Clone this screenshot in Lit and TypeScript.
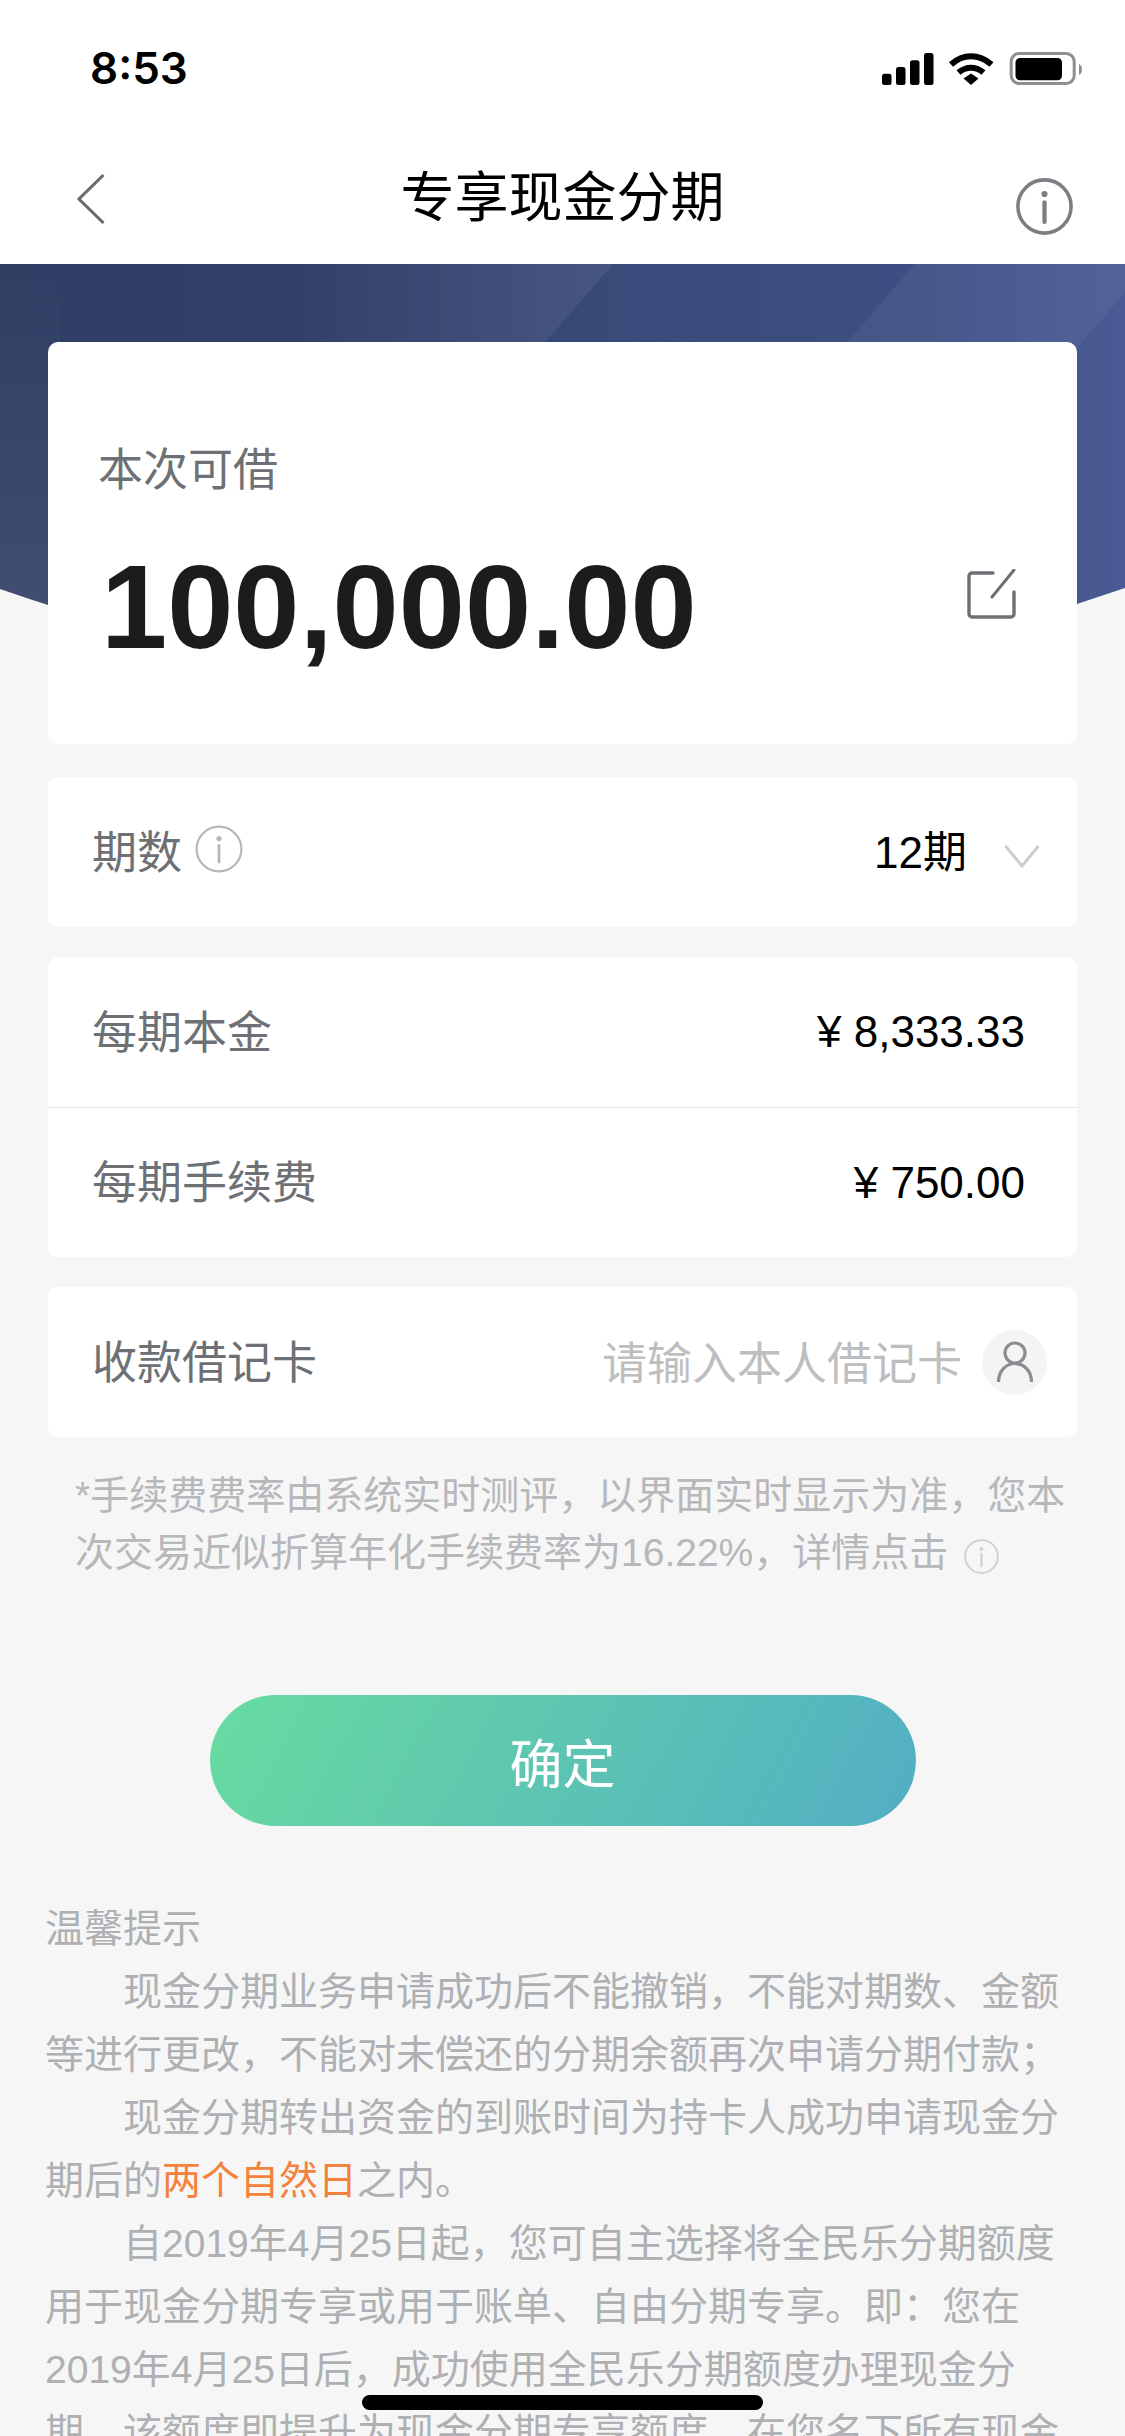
import { LitElement, html, css } from "lit";
import { customElement } from "lit/decorators.js";

const infoIcon = (size: number, color: string, sw: number) => html`<svg width=${size} height=${size} viewBox="0 0 48 48" fill="none" class="ico">
  <circle cx="24" cy="24" r="22.4" stroke=${color} stroke-width=${sw}/>
  <circle cx="24" cy="13.5" r="2.6" fill=${color}/>
  <path d="M24 20.5V37" stroke=${color} stroke-width=${sw + 0.6} stroke-linecap="round"/>
</svg>`;

@customElement("app-root")
export class AppRoot extends LitElement {
  static styles = css`
    :host { display: block; width: 1125px; height: 2436px; overflow: hidden; position: relative; background: #f6f6f6;
      font-family: "Liberation Sans", "Noto Sans CJK SC", sans-serif; color: #000; }
    .ico { display: block; flex: none; }
    .top { background: #fff; height: 264px; display: flex; flex-direction: column; }
    .status { height: 132px; display: flex; align-items: center; justify-content: space-between; padding: 2px 43px 0 90px; }
    .time { font: 600 44px/1 "Inter", "Liberation Sans", sans-serif; }
    .sys { display: flex; align-items: center; }
    .nav { flex: 1; display: grid; grid-template-columns: 1fr auto 1fr; align-items: center; padding: 0 52px; }
    .nav .back { margin-left: 25px; }
    .title { font-size: 54px; line-height: 64px; margin-top: -2px; }
    .nav .right { justify-self: end; padding-top: 14px; }
    .hero { position: relative; padding: 78px 48px 33px; }
    .hero-bg { position: absolute; left: 0; top: 0; display: block; }
    .card { position: relative; background: #fff; border-radius: 10px; }
    .amount-card { height: 402px; padding: 97px 51px 0; box-sizing: border-box; }
    .amount-label { font-size: 45px; line-height: 64px; color: #6d7175; margin-left: -1px; }
    .amount-row { display: flex; align-items: flex-start; justify-content: space-between; margin-top: 36px; padding-left: 2px; padding-right: 10px; }
    .amount { font-size: 119px; font-weight: 700; line-height: 136px; color: #1c1c1c; }
    .edit { margin-top: 30px; }
    .rows { padding: 0 48px; display: flex; flex-direction: column; gap: 30px; }
    .rows .card { overflow: hidden; }
    .row { height: 150px; box-sizing: border-box; display: flex; align-items: center; justify-content: space-between; padding: 0 52px 0 44px; font-size: 44px; }
    .row + .row { border-top: 1px solid #e6e6e6; }
    .label { color: #6d7175; display: flex; align-items: center; gap: 13px; font-size: 45px; margin-bottom: 6px; }
    .value { color: #000; }
    .select { padding-right: 37px; }
    .sel-val { display: flex; align-items: center; gap: 37px; margin-bottom: 6px; }
    .chev { margin-top: 13px; }
    .card-row { padding-right: 30px; }
    .card-val { display: flex; align-items: center; gap: 20px; color: #bdbec0; font-size: 45px; }
    .card-val .ph { margin-bottom: 3px; }
    .avatar { width: 65px; height: 65px; border-radius: 50%; background: #f4f4f4; display: flex; align-items: center; justify-content: center; }
    .note { margin: 30px 48px 0 75px; font-size: 39px; line-height: 57px; color: #b6b8bb; }
    .note .ico { display: inline-block; vertical-align: -8px; margin-left: 16px; }
    .btn { display: flex; align-items: center; justify-content: center; width: 706px; height: 131px; margin: 114px auto 0; border: 0; padding: 0;
      border-radius: 66px; background: linear-gradient(118deg, #68dba0 0%, #52aec4 100%); color: #fff; font: inherit; font-size: 53px; }
    .tips { margin: 71px 46px 0 45px; font-size: 39px; line-height: 63px; color: #aeb0b3; }
    .tips p { margin: 0; text-indent: 78px; }
    .tips .head { text-indent: 0; }
    .hl { color: #f5823c; }
    .home { position: absolute; left: 362px; top: 2395px; width: 401px; height: 15px; border-radius: 8px; background: #000; }
  `;

  render() {
    return html`
      <div class="top">
        <div class="status">
          <span class="time">8:53</span>
          <div class="sys">
            <svg class="ico" width="200" height="33" viewBox="0 0 200 33" fill="none">
              <rect x="0" y="21.7" width="9.5" height="11.3" rx="2.5" fill="#000"/>
              <rect x="14" y="15" width="9.5" height="18" rx="2.5" fill="#000"/>
              <rect x="28" y="8.3" width="9.5" height="24.7" rx="2.5" fill="#000"/>
              <rect x="42" y="1" width="9.5" height="32" rx="2.5" fill="#000"/>
              <path d="M69 12.5C81 1.5 97 1.5 109.5 12.5" stroke="#000" stroke-width="6"/>
              <path d="M76.5 20.5C84 14 94 14 101.5 20.5" stroke="#000" stroke-width="6"/>
              <path d="M81.5 26.5L89 21.5L96.5 26.5L89 33Z" fill="#000"/>
              <rect x="129.2" y="1.5" width="63" height="30" rx="8" stroke="#8f8f8f" stroke-width="3"/>
              <rect x="133.5" y="6" width="46.5" height="22.3" rx="4.5" fill="#000"/>
              <path d="M197 12C199 13 200 15 200 17.5C200 20 199 22 197 23Z" fill="#8f8f8f"/>
            </svg>
          </div>
        </div>
        <div class="nav">
          <svg class="ico back" width="28" height="50" viewBox="0 0 28 50" fill="none"><path d="M26.5 1L2 25L26.5 49" stroke="#6b6b6b" stroke-width="3"/></svg>
          <div class="title">专享现金分期</div>
          <div class="right">${infoIcon(57, "#7b7e82", 3)}</div>
        </div>
      </div>
      <div class="hero">
        <svg class="hero-bg" width="1125" height="430" viewBox="0 0 1125 430">
          <defs>
            <linearGradient id="g" x1="0" y1="0" x2="1" y2="0">
              <stop offset="0" stop-color="#2f3e63"/><stop offset="0.2" stop-color="#2f3f66"/><stop offset="0.55" stop-color="#3a4a79"/><stop offset="0.8" stop-color="#3d4e82"/><stop offset="1" stop-color="#4a5a94"/>
            </linearGradient>
            <linearGradient id="f" x1="0" y1="0" x2="1" y2="0">
              <stop offset="0" stop-color="#fff" stop-opacity="0"/><stop offset="1" stop-color="#fff" stop-opacity="0.07"/>
            </linearGradient>
            <linearGradient id="v" x1="0" y1="0" x2="0" y2="1">
              <stop offset="0" stop-color="#fff" stop-opacity="0"/><stop offset="1" stop-color="#fff" stop-opacity="0.08"/>
            </linearGradient>
            <clipPath id="c"><path d="M0 0H1125V324Q562 521 0 325Z"/></clipPath>
          </defs>
          <g clip-path="url(#c)">
            <rect width="1125" height="430" fill="url(#g)"/>
            <rect width="60" height="340" fill="url(#v)"/>
            <path d="M300 0H613L483 150H300Z" fill="url(#f)"/>
            <path d="M915 0H1150L1020 150H785Z" fill="#fff" fill-opacity="0.05"/>
          </g>
        </svg>
        <div class="card amount-card">
          <div class="amount-label">本次可借</div>
          <div class="amount-row">
            <span class="amount">100,000.00</span>
            <svg class="ico edit" width="49" height="50" viewBox="0 0 49 50" fill="none">
              <path d="M26 4H5a3 3 0 0 0-3 3V45a3 3 0 0 0 3 3H44a3 3 0 0 0 3-3V23" stroke="#6c7075" stroke-width="3.4" stroke-linecap="round"/>
              <path d="M47 1L25 28" stroke="#6c7075" stroke-width="3" stroke-linecap="round"/>
            </svg>
          </div>
        </div>
      </div>
      <div class="rows">
        <div class="card">
          <div class="row select">
            <span class="label">期数${infoIcon(48, "#b5b7b9", 2.2)}</span>
            <span class="value sel-val">12期
              <svg class="ico chev" width="36" height="24" viewBox="0 0 36 24" fill="none"><path d="M1.5 2L18 22L34.5 2" stroke="#c9ced3" stroke-width="3"/></svg>
            </span>
          </div>
        </div>
        <div class="card">
          <div class="row"><span class="label">每期本金</span><span class="value">¥ 8,333.33</span></div>
          <div class="row"><span class="label">每期手续费</span><span class="value">¥ 750.00</span></div>
        </div>
        <div class="card">
          <div class="row card-row">
            <span class="label">收款借记卡</span>
            <span class="card-val"><span class="ph">请输入本人借记卡</span>
              <span class="avatar">
                <svg class="ico" width="38" height="42" viewBox="0 0 38 42" fill="none">
                  <circle cx="19" cy="12" r="10" stroke="#8b8e91" stroke-width="3.2"/>
                  <path d="M2.5 41C2.5 30 10 22.5 19 22.5C28 22.5 35.5 30 35.5 41" stroke="#8b8e91" stroke-width="3.2"/>
                </svg>
              </span>
            </span>
          </div>
        </div>
      </div>
      <div class="note">*手续费费率由系统实时测评，以界面实时显示为准，您本次交易近似折算年化手续费率为16.22%，详情点击${infoIcon(35, "#cfd1d3", 2.6)}</div>
      <button class="btn">确定</button>
      <div class="tips">
        <p class="head">温馨提示</p>
        <p>现金分期业务申请成功后不能撤销，不能对期数、金额等进行更改，不能对未偿还的分期余额再次申请分期付款；</p>
        <p>现金分期转出资金的到账时间为持卡人成功申请现金分期后的<span class="hl">两个自然日</span>之内。</p>
        <p>自2019年4月25日起，您可自主选择将全民乐分期额度用于现金分期专享或用于账单、自由分期专享。即：您在2019年4月25日后，成功使用全民乐分期额度办理现金分期，该额度即提升为现金分期专享额度，在您名下所有现金</p>
      </div>
      <div class="home"></div>
    `;
  }
}
